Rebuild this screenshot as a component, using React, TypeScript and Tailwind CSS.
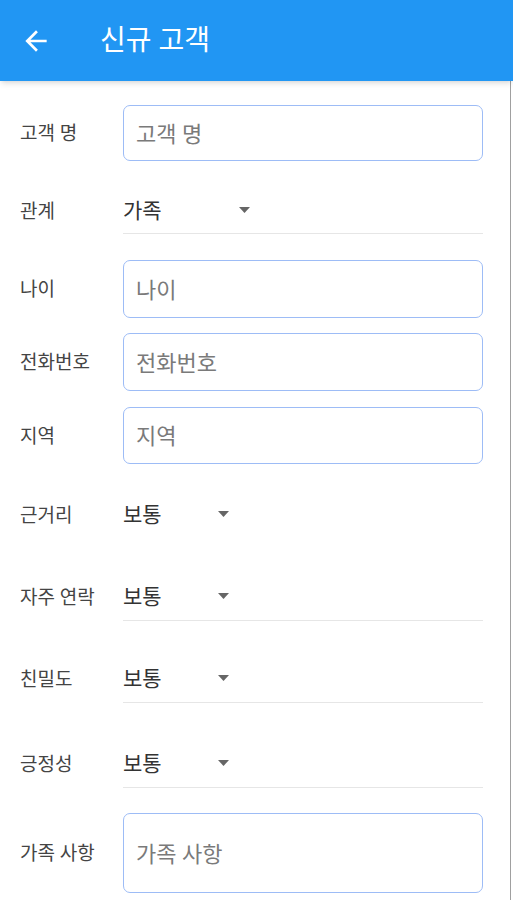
const FONT = "font-['Roboto','Noto_Sans_CJK_KR',sans-serif]";

function TextRow({ label, placeholder, className, boxClass }: { label: string; placeholder: string; className: string; boxClass: string }) {
  return (
    <div className={`flex items-center ${className}`}>
      <div className="w-[123px] shrink-0 pl-5 pt-[3px] text-[19px] text-[#444]">{label}</div>
      <div className={`flex w-[360px] items-center rounded-[7px] border-[1.5px] border-[#9dbcf6] pl-[12px] pt-[2px] text-[22px] text-[#7a7a7a] ${boxClass}`}>
        {placeholder}
      </div>
    </div>
  );
}

function DropRow({ label, value, width, className, line = true }: { label: string; value: string; width: string; className: string; line?: boolean }) {
  return (
    <div className={`flex ${className}`}>
      <div className="flex w-[123px] shrink-0 items-center pl-5 pt-[3px] text-[19px] text-[#444]">{label}</div>
      <div className={`flex h-full w-[360px] items-center border-b ${line ? 'border-[#e6e6e6]' : 'border-transparent'}`}>
        <div className={`flex items-center justify-between ${width}`}>
          <span className="pt-[3px] text-[21px] text-[#333]">{value}</span>
          <svg width="11" height="6" viewBox="0 0 11 6">
            <path d="M0 0 L11 0 L5.5 6 Z" fill="#666" />
          </svg>
        </div>
      </div>
    </div>
  );
}

export default function App() {
  return (
    <div className={`h-[900px] w-[513px] overflow-hidden bg-white ${FONT}`}>
      <div className="relative z-10 flex h-[81px] items-center bg-[#2196f3] shadow-md">
        <svg className="ml-[20px]" width="32" height="32" viewBox="0 0 24 24">
          <path d="M20 11H7.83l5.59-5.59L12 4l-8 8 8 8 1.41-1.41L7.83 13H20v-2z" fill="#fff" />
        </svg>
        <div className="ml-[48px] text-[28px] font-normal text-white">신규 고객</div>
      </div>
      <div className="h-[819px] w-[511px] border-r border-[#a0a0a0] pt-[24px]">
        <TextRow label="고객 명" placeholder="고객 명" className="" boxClass="h-[56px]" />
        <DropRow label="관계" value="가족" width="w-[127px]" className="mt-[26px] h-[47px]" />
        <TextRow label="나이" placeholder="나이" className="mt-[26px]" boxClass="h-[58px]" />
        <TextRow label="전화번호" placeholder="전화번호" className="mt-[15px]" boxClass="h-[58px]" />
        <TextRow label="지역" placeholder="지역" className="mt-[16px]" boxClass="h-[57px]" />
        <DropRow label="근거리" value="보통" width="w-[106px]" className="mt-[26px] h-[49px]" line={false} />
        <DropRow label="자주 연락" value="보통" width="w-[106px]" className="mt-[33px] h-[49px]" />
        <DropRow label="친밀도" value="보통" width="w-[106px]" className="mt-[33px] h-[49px]" />
        <DropRow label="긍정성" value="보통" width="w-[106px]" className="mt-[36px] h-[49px]" />
        <TextRow label="가족 사항" placeholder="가족 사항" className="mt-[25px]" boxClass="h-[80px]" />
      </div>
    </div>
  );
}
